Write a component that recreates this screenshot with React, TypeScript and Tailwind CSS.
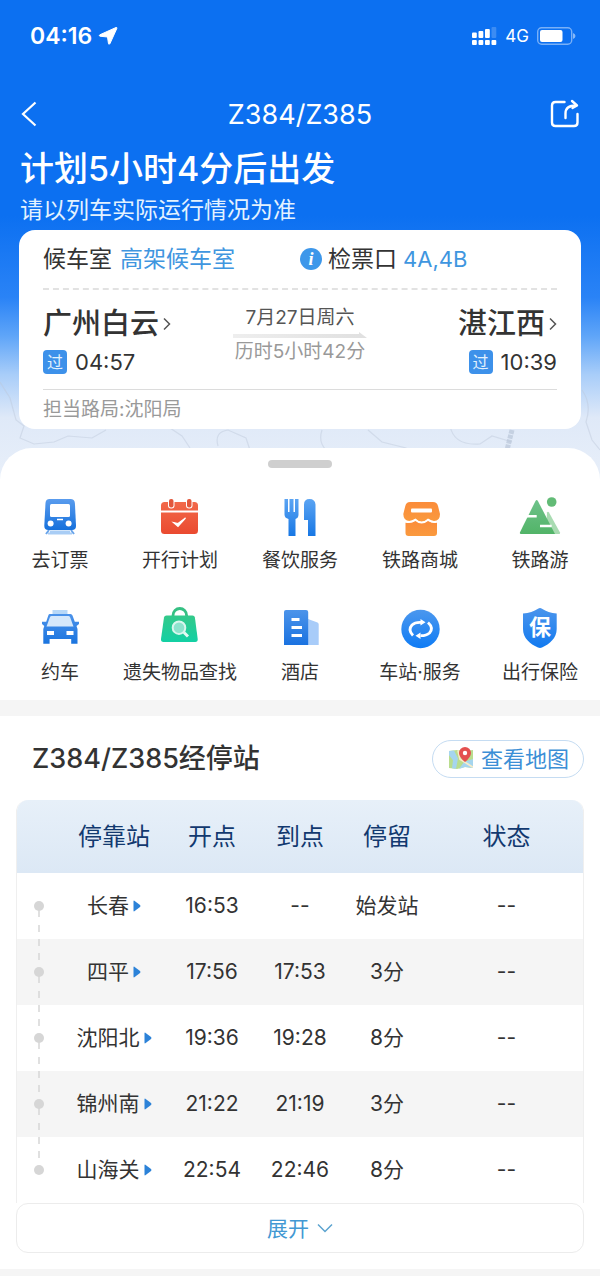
import type { ReactNode } from "react";

type Service = {
  label: string;
  icon: ReactNode;
};

type Stop = {
  station: string;
  departure: string;
  arrival: string;
  stay: string;
  status: string;
};

function Gradient({ id, from, to }: { id: string; from: string; to: string }) {
  return (
    <linearGradient id={id} x1="0" y1="0" x2="0" y2="1">
      <stop offset="0" stopColor={from} />
      <stop offset="1" stopColor={to} />
    </linearGradient>
  );
}

function ServiceIcon({ children }: { children: ReactNode }) {
  return (
    <svg viewBox="0 0 44 44" className="h-11 w-11" aria-hidden="true">
      {children}
    </svg>
  );
}

const services: Service[] = [
  {
    label: "去订票",
    icon: (
      <ServiceIcon>
        <Gradient id="train" from="#5a9cee" to="#1570dc" />
        <path d="M12 36.500h20M10 38.500h24" stroke="#a9cdf5" strokeWidth="2" />
        <path d="M8 39l3-4M36 39l-3-4" stroke="#6aa5ea" strokeWidth="2" />
        <path
          d="M11.500 4h21q4 0 4.400 4L38 30.500q.2 4.500-4 4.500H10.300q-4.200 0-4-4.500L7.500 8q.3-4 4-4Z"
          fill="url(#train)"
        />
        <rect x="12" y="9" width="20" height="13" rx="1.500" fill="#fff" />
        <path d="M19 24.500h6" stroke="#fff" strokeWidth="1.500" />
        <circle cx="12.600" cy="28.500" r="3" fill="#fff" />
        <circle cx="30.600" cy="28.500" r="3" fill="#fff" />
      </ServiceIcon>
    ),
  },
  {
    label: "开行计划",
    icon: (
      <ServiceIcon>
        <Gradient id="plan" from="#f2694a" to="#ea4a30" />
        <rect x="3" y="7" width="37" height="32" rx="3.500" fill="url(#plan)" />
        <path d="M3 16.500h37" stroke="#fff" strokeWidth="2" />
        <rect x="10" y="3" width="6.500" height="10.500" rx="3" fill="#fff" />
        <rect x="28" y="3" width="6.500" height="10.500" rx="3" fill="#fff" />
        <rect x="11" y="4" width="4.500" height="8.500" rx="2" fill="#e2573c" />
        <rect x="29" y="4" width="4.500" height="8.500" rx="2" fill="#e2573c" />
        <path d="M15.500 27.500l4.500 4 7.500-8.500-7.500 5.500z" fill="#fff" stroke="#fff" strokeWidth="1.200" />
      </ServiceIcon>
    ),
  },
  {
    label: "餐饮服务",
    icon: (
      <ServiceIcon>
        <Gradient id="dining" from="#5ba4f3" to="#1777e4" />
        <path
          d="M6.500 4h3.500v13h1.500V4h4v13H17V4h3.500v15.500q0 3.500-3 4.500V41h-7V24q-4-1-4-4.500Z"
          fill="url(#dining)"
        />
        <path d="M26 9.500Q26 4 31.500 4t6 5.500V41H30V25h-4Z" fill="url(#dining)" />
      </ServiceIcon>
    ),
  },
  {
    label: "铁路商城",
    icon: (
      <ServiceIcon>
        <Gradient id="mall" from="#fb8c3a" to="#fa9a3e" />
        <path
          d="M12 7h23q4 0 5 4l2 8q0 7-6 7-3 0-6-2-3 3-6.500 3T17.500 24q-2.500 2-6 2-6 0-6.200-7l2-8q1-4 4.700-4Z"
          fill="url(#mall)"
        />
        <path
          d="M7.500 27.500q5 1.500 10-1.500 6 5 12.500 0 5 3 9 1.500V38q0 3-3 3H10.500q-3 0-3-3Z"
          fill="url(#mall)"
        />
        <path d="M6.500 26.500q6 1.500 11-2 6 5.500 12.500 0 5 3.500 10 2" fill="none" stroke="#fff" strokeWidth="1.600" />
        <rect x="13" y="13.500" width="21" height="4" rx="1" fill="#fff" />
      </ServiceIcon>
    ),
  },
  {
    label: "铁路游",
    icon: (
      <ServiceIcon>
        <Gradient id="tour" from="#6ec28a" to="#52b468" />
        <path d="M29 17.500q1-1.500 2 0L42 37.500q.5 1.500-1 1.500H28Z" fill="#a9dbb2" />
        <path d="M17.500 6q1.200-2 2.400 0L37 39H3q-1.600 0-1-1.800Z" fill="url(#tour)" />
        <circle cx="33.700" cy="7" r="4.800" fill="#62bb76" />
        <path d="M9 21.300h9.700M22 31h11.700" stroke="#fff" strokeWidth="2.600" />
      </ServiceIcon>
    ),
  },
  {
    label: "约车",
    icon: (
      <ServiceIcon>
        <Gradient id="taxi" from="#4c93ea" to="#1a74df" />
        <path d="M14.500 3h15v4h-15z" fill="#b7d8f8" />
        <path
          d="M11.500 7h21q1.500 0 2 1.500l2.300 6.200H41V17l-2.500 2 1 3v14.700h-6.300V32H11.600v4.700H5.300V22l1-3L4 17v-2.300h4.200l2-6q.4-1.700 1.300-1.700Z"
          fill="url(#taxi)"
        />
        <path d="M13.500 9h17q1 0 1.500 1l3.500 9.500h-27L12 10q.5-1 1.500-1Z" fill="#d5e8fb" />
        <rect x="9" y="24" width="7" height="4" fill="#fff" />
        <rect x="28.500" y="24" width="7" height="4" fill="#fff" />
      </ServiceIcon>
    ),
  },
  {
    label: "遗失物品查找",
    icon: (
      <ServiceIcon>
        <Gradient id="lost" from="#33c98a" to="#13d0a4" />
        <path d="M15 10V8.500a6.800 7 0 0 1 13.600 0V10" fill="none" stroke="#35c083" strokeWidth="2.800" />
        <path
          d="M8.500 8.500h26q2 0 2.400 2L39.700 32q.3 3-2.500 3H5.500Q2.700 35 3 32l3-21.500q.4-2 2.500-2Z"
          fill="url(#lost)"
        />
        <circle cx="21" cy="20.700" r="6.300" fill="#8de3cd" stroke="#d9f6ee" strokeWidth="2" />
        <path d="M26 25.500l4 4" stroke="#e6faf4" strokeWidth="3" />
      </ServiceIcon>
    ),
  },
  {
    label: "酒店",
    icon: (
      <ServiceIcon>
        <Gradient id="hotel" from="#4c94ea" to="#1a72e0" />
        <path d="M30 12l9.500 3.500q1.200.5 1.200 2V38H30Z" fill="#a8ccf9" />
        <path d="M8 3h20q2.200 0 2.200 2v33H6V5q0-2 2-2Z" fill="url(#hotel)" />
        <path d="M13.500 12.500h8M13.500 20.500h10.500M13.500 28.500h10.500" stroke="#fff" strokeWidth="2.800" />
      </ServiceIcon>
    ),
  },
  {
    label: "车站·服务",
    icon: (
      <ServiceIcon>
        <Gradient id="station" from="#4b97ee" to="#0f7cf5" />
        <circle cx="22.500" cy="22" r="19.200" fill="url(#station)" />
        <g fill="none" stroke="#fff" strokeWidth="2.800">
          <path d="M15 28.500q-5.500-5.500-1-10.500 3-2.800 9-2.500" />
          <path d="M30 15.500q6 5.500 1.500 10.500-3 2.800-9 2.700" />
        </g>
        <path d="M22.500 12l5 3.300-5 3.300zM22.500 25.400l-5 3.300 5 3.300z" fill="#fff" />
      </ServiceIcon>
    ),
  },
  {
    label: "出行保险",
    icon: (
      <ServiceIcon>
        <Gradient id="insurance" from="#4b95ec" to="#127af0" />
        <path
          d="M20 1.800q2-1.400 4 0Q30 6 38.700 6.500V22c0 9-7 15-14.700 18.500q-2 .8-4 0C12 37 5 31 5 22V6.500Q14 6 20 1.800Z"
          fill="url(#insurance)"
        />
        <text
          x="22"
          y="28"
          textAnchor="middle"
          fontSize="22"
          fontWeight="700"
          fill="#fff"
        >
          保
        </text>
      </ServiceIcon>
    ),
  },
];

const stops: Stop[] = [
  { station: "长春", departure: "16:53", arrival: "--", stay: "始发站", status: "--" },
  { station: "四平", departure: "17:56", arrival: "17:53", stay: "3分", status: "--" },
  { station: "沈阳北", departure: "19:36", arrival: "19:28", stay: "8分", status: "--" },
  { station: "锦州南", departure: "21:22", arrival: "21:19", stay: "3分", status: "--" },
  { station: "山海关", departure: "22:54", arrival: "22:46", stay: "8分", status: "--" },
];

function StatusBar() {
  return (
    <div className="flex h-[72px] items-center justify-between pr-6 pl-[30px]">
      <div className="flex items-center gap-1.5">
        <span className="text-[23px] leading-none font-semibold">04:16</span>
        <svg viewBox="0 0 20 20" className="h-5 w-5" aria-hidden="true">
          <path
            d="M18 1.500q1.200-.3.800 1L12 17.500q-.8 1.500-1.500.2L9.500 11 2 10.200q-1.500-.6-.2-1.400Z"
            fill="#fff"
            stroke="#fff"
            strokeLinejoin="round"
          />
        </svg>
      </div>
      <div className="flex items-center gap-2">
        <svg viewBox="0 0 25 20" className="h-5 w-[25px]" aria-hidden="true">
          <g fill="#fff">
            <rect x="0" y="6.500" width="4.800" height="5.500" rx="1" />
            <rect x="6.500" y="5" width="4.800" height="7" rx="1" />
            <rect x="13" y="3" width="4.800" height="9" rx="1" />
            <rect x="19.500" y="1" width="4.800" height="11" rx="1" opacity=".2" />
            <rect x="0" y="14" width="4.800" height="5" rx="1" />
            <rect x="6.500" y="14" width="4.800" height="5" rx="1" />
            <rect x="13" y="14" width="4.800" height="5" rx="1" />
            <rect x="19.500" y="14" width="4.800" height="5" rx="1" />
          </g>
        </svg>
        <span className="text-[17px] leading-none">4G</span>
        <svg viewBox="0 0 39 18" className="h-[18px] w-[39px]" aria-hidden="true">
          <rect
            x=".7"
            y=".7"
            width="34"
            height="16.600"
            rx="4"
            fill="none"
            stroke="#fff"
            strokeOpacity=".45"
            strokeWidth="1.400"
          />
          <rect x="3" y="3" width="22.500" height="12" rx="2" fill="#fff" />
          <path d="M36 6q2.500.8 2.500 3T36 12Z" fill="#fff" fillOpacity=".5" />
        </svg>
      </div>
    </div>
  );
}

function NavBar() {
  return (
    <nav className="flex h-[84px] items-center justify-between px-5">
      <button type="button" aria-label="返回" className="flex w-8 justify-start">
        <svg viewBox="0 0 18 28" className="h-7 w-[18px]" aria-hidden="true">
          <path d="M15.500 2.500L3 14l12.500 11.500" fill="none" stroke="#fff" strokeWidth="2.200" />
        </svg>
      </button>
      <span className="text-[27px] leading-none">Z384/Z385</span>
      <button type="button" aria-label="分享" className="flex w-8 justify-end">
        <svg viewBox="0 0 30 30" className="h-[30px] w-[30px]" aria-hidden="true">
          <g fill="none" stroke="#fff" strokeWidth="2.400" strokeLinecap="round" strokeLinejoin="round">
            <path d="M14.500 3H5.500Q2 3 2 6.500v17Q2 27 5.500 27h18.500q3.500 0 3.500-3.500V15" />
            <path d="M15.500 19v-4.500Q15.500 6.500 26 6.500" />
            <path d="M22 2l5 4.500L22.500 9" />
          </g>
        </svg>
      </button>
    </nav>
  );
}

// Faint province outlines along the bottom of the header
function MapLines() {
  return (
    <svg
      viewBox="0 0 600 120"
      preserveAspectRatio="xMidYMax slice"
      className="absolute inset-x-0 bottom-0 h-[120px] w-full"
      aria-hidden="true"
    >
      <g fill="none" stroke="#bcc8da" strokeOpacity=".45" strokeWidth="1.200">
        <path d="M0 22l10 16 6 22 8 6-4 12 14 6 20-2 14-6 24 2 14-8" />
        <path d="M170 68l12 8 8 12M218 86q-4-14 10-16l18 8 4 12M322 70q-4 12 4 20M368 70l14 12 24 6 8 10" />
        <path d="M450 66q4 20 30 18l12-8 20 6M582 30q10 14 4 32l6 18 8 10" />
      </g>
      <path d="M512 70l-5 20" stroke="#b9c6d8" strokeOpacity=".7" strokeWidth="5" strokeDasharray="4 1" />
    </svg>
  );
}

function Chevron() {
  return (
    <svg viewBox="0 0 8 14" className="h-3.5 w-2" aria-hidden="true">
      <path d="M1 1.500L6.500 7 1 12.500" fill="none" stroke="#555" strokeWidth="1.500" />
    </svg>
  );
}

function StationName({ name }: { name: string }) {
  return (
    <button type="button" className="flex items-center gap-1 text-[29px] leading-10 font-medium">
      {name}
      <Chevron />
    </button>
  );
}

function PassTime({ time }: { time: string }) {
  return (
    <div className="flex items-center gap-2">
      <span className="flex h-6 w-6 items-center justify-center rounded bg-[#3d91ea] text-base leading-none text-[#e3f1fd]">
        过
      </span>
      <time className="text-[22px] leading-6">{time}</time>
    </div>
  );
}

function TripCard() {
  return (
    <section className="relative mx-[19px] rounded-2xl bg-white px-6 text-[#333]">
      <div className="flex h-[60px] items-center border-b-2 border-dashed border-[#e2e2e2] text-[23px] leading-none">
        <div className="flex flex-1 items-center gap-2">
          <span>候车室</span>
          <span className="text-[#3f96df]">高架候车室</span>
        </div>
        <div className="flex flex-1 items-center gap-1.5">
          <span className="flex h-[22px] w-[22px] items-center justify-center rounded-full bg-[#3d97ea] font-['Liberation_Serif',serif] text-lg leading-none font-bold text-white italic">
            i
          </span>
          <span>检票口</span>
          <span className="text-[22px] text-[#3f96df]">4A,4B</span>
        </div>
      </div>

      <div className="grid h-[100px] grid-cols-[1fr_auto_1fr] items-start border-b border-[#dcdcdc] pt-3.5">
        <div className="flex flex-col gap-1.5">
          <StationName name="广州白云" />
          <PassTime time="04:57" />
        </div>
        <div className="flex flex-col items-center pt-0.5 text-[19px] leading-6">
          <span className="text-[#555]">7月27日周六</span>
          <svg viewBox="0 0 134 6" className="my-0.5 h-1.5 w-[134px]" aria-hidden="true">
            <linearGradient id="arrow" x1="0" y1="0" x2="1" y2="0">
              <stop offset="0" stopColor="#eeeeee" />
              <stop offset="1" stopColor="#e0e0e0" />
            </linearGradient>
            <path d="M0 2h126V0l8 6H0Z" fill="url(#arrow)" />
          </svg>
          <span className="text-[#999]">历时5小时42分</span>
        </div>
        <div className="flex flex-col items-end gap-1.5">
          <StationName name="湛江西" />
          <PassTime time="10:39" />
        </div>
      </div>

      <p className="flex h-[39px] items-center text-[19px] leading-none text-[#999]">担当路局:沈阳局</p>
    </section>
  );
}

function ServiceGrid() {
  return (
    <section className="relative -mt-8 rounded-t-[32px] bg-white pt-3 pb-[13px]">
      <div className="mx-auto h-2 w-16 rounded-full bg-[#cfcfcf]" />
      <ul className="mt-[27px] grid grid-cols-5 gap-y-8">
        {services.map((service) => (
          <li key={service.label}>
            <a href="#" className="flex flex-col items-center gap-2 text-[#333]">
              {service.icon}
              <span className="text-[19px] leading-7 whitespace-nowrap">{service.label}</span>
            </a>
          </li>
        ))}
      </ul>
    </section>
  );
}

function MapIcon() {
  return (
    <svg viewBox="0 0 24 24" className="h-6 w-6" aria-hidden="true">
      <path d="M0 4l8-1 8 1 8-1v18l-8-1-8 2-8-1Z" fill="#b9dd8e" />
      <path d="M5 3.400l4 8-2 10.300-4-.5 1-8-4-5V4ZM24 12l-9 3-5 7 6-2 8 1Z" fill="#a5d5ee" />
      <path d="M9 3.200l2 9 13 8" fill="none" stroke="#f6ecc8" strokeWidth="1.800" />
      <path d="M16 15q-6-5-6-9a6 6 0 0 1 12 0q0 4-6 9Z" fill="#e4504f" />
      <circle cx="16" cy="6" r="2.200" fill="#fff" />
    </svg>
  );
}

function TimelineMarker({ isFirst, isLast }: { isFirst: boolean; isLast: boolean }) {
  return (
    <svg viewBox="0 0 10 66" className="mx-auto block h-[66px] w-2.5" aria-hidden="true">
      {isFirst ? null : <path d="M5 0v7M5 14v7" stroke="#d6d6d6" strokeWidth="1.500" />}
      {isLast ? null : <path d="M5 37v7M5 52v7" stroke="#d6d6d6" strokeWidth="1.500" />}
      <circle cx="5" cy="33" r="5" fill="#d6d6d6" />
    </svg>
  );
}

function StopTable() {
  return (
    <div className="mx-4 mt-[22px]">
      <div className="overflow-hidden rounded-t-xl border-x border-[#efefef]">
        <table className="w-full table-fixed text-center text-[#333]">
          <thead>
            <tr className="h-[73px] bg-linear-to-b from-[#e7f0f9] to-[#dce8f5] text-2xl text-[#12396f]">
              <th className="w-[43px]" aria-label="线路" />
              <th className="w-[108px] font-normal">停靠站</th>
              <th className="w-[88px] font-normal">开点</th>
              <th className="w-[88px] font-normal">到点</th>
              <th className="w-[86px] font-normal">停留</th>
              <th className="font-normal">状态</th>
            </tr>
          </thead>
          <tbody>
            {stops.map((stop, index) => (
              <tr key={stop.station} className="h-[66px] bg-white text-[21px] leading-8 even:bg-[#f5f5f5]">
                <td className="p-0">
                  <TimelineMarker isFirst={index === 0} isLast={index === stops.length - 1} />
                </td>
                <td className="p-0">
                  <a href="#" className="inline-flex items-center gap-1">
                    {stop.station}
                    <svg viewBox="0 0 8 12" className="h-3 w-2" aria-hidden="true">
                      <path d="M.5 1.500q0-1.500 1.200-.6L7 5q1 1 0 2l-5.300 4.100Q.5 12 .5 10.500Z" fill="#2c82d8" />
                    </svg>
                  </a>
                </td>
                <td className="p-0">{stop.departure}</td>
                <td className="p-0">{stop.arrival}</td>
                <td className="p-0">{stop.stay}</td>
                <td className="p-0">{stop.status}</td>
              </tr>
            ))}
          </tbody>
        </table>
      </div>
      <button
        type="button"
        className="flex h-[50px] w-full items-center justify-center gap-2 rounded-xl border border-[#ececec] text-[21px] leading-none text-[#4298d3]"
      >
        展开
        <svg viewBox="0 0 16 10" className="h-2.5 w-4" aria-hidden="true">
          <path d="M1 1.500l7 7 7-7" fill="none" stroke="#5ba3cf" strokeWidth="1.500" />
        </svg>
      </button>
    </div>
  );
}

export default function App() {
  return (
    <div className="min-h-screen bg-white font-[Inter,'Noto_Sans_CJK_SC',sans-serif]">
      <header className="relative bg-[linear-gradient(#0c70f1_45%,#2a83f6_62%,#5fa5f8_70%,#a8cdf9_78%,#dfe9f8_87%,#e8eff9)] pb-[51px] text-white">
        <MapLines />
        <StatusBar />
        <NavBar />
        <div className="-mt-2.5 px-5 pb-0.5">
          <h1 className="text-[34px] leading-[46px] font-medium">计划5小时4分后出发</h1>
          <p className="text-[23px] leading-9 text-[#e3f2ff]">请以列车实际运行情况为准</p>
        </div>
        <TripCard />
      </header>

      <main>
        <ServiceGrid />
        <section className="border-y-16 border-[#f5f5f5] bg-white pt-6 pb-4">
          <div className="flex items-center justify-between pr-4 pl-8">
            <h2 className="text-[27px] leading-9 font-medium text-[#333]">Z384/Z385经停站</h2>
            <button
              type="button"
              className="flex h-[38px] items-center gap-2 rounded-full border border-[#c5dcf2] pr-3.5 pl-4 text-[22px] leading-none text-[#3c8fd6]"
            >
              <MapIcon />
              查看地图
            </button>
          </div>
          <StopTable />
        </section>
      </main>
    </div>
  );
}
